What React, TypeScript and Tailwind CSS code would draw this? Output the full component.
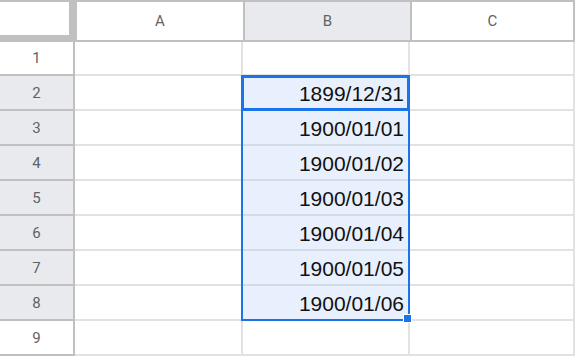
import * as React from 'react';

const COLS = ['A', 'B', 'C'];
const ROWS = 9;
// column B holds the serial-date values, rows 2..8
const VALUES: Record<number, string> = {
  2: '1899/12/31',
  3: '1900/01/01',
  4: '1900/01/02',
  5: '1900/01/03',
  6: '1900/01/04',
  7: '1900/01/05',
  8: '1900/01/06',
};

const isSel = (r: number) => r >= 2 && r <= 8;

export default function App() {
  const rows = Array.from({ length: ROWS }, (_, i) => i + 1);

  return (
    <div className="relative w-[577px] h-[357px] overflow-hidden bg-white font-['Liberation_Sans',Arial,sans-serif]">
      <div className="grid grid-cols-[75px_168px_167px_165px] grid-rows-[42px_34px_repeat(8,35px)] w-[575px]">
        {/* corner with freeze handles */}
        <div className="border-t-2 border-[#c0c0c0] bg-[#c0c0c0] flex flex-col">
          <div className="flex h-[33px]">
            <div className="w-[69px] bg-white" />
            <div className="flex-1 bg-[#c0c0c0]" />
          </div>
          <div className="flex-1 bg-[#c0c0c0]" />
        </div>

        {COLS.map((c) => (
          <div
            key={c}
            className={`flex items-center justify-center border-t-2 border-b-2 border-l-2 border-[#c0c0c0] font-['Roboto',Arial,sans-serif] text-[15px] text-[#5f6368] ${
              c === 'B' ? 'bg-[#e8eaed]' : 'bg-white'
            } ${c === 'C' ? 'border-r-2' : ''}`}
          >
            {c}
          </div>
        ))}

        {rows.map((r) => (
          <React.Fragment key={r}>
            <div
              className={`flex items-center justify-center pt-[1px] border-r-2 border-b-2 border-[#c0c0c0] font-['Roboto',Arial,sans-serif] text-[15px] text-[#5f6368] ${
                isSel(r) ? 'bg-[#e8eaed]' : 'bg-white'
              }`}
            >
              {r}
            </div>
            <div className="border-b-2 border-r-2 border-[#e2e2e2]" />
            <div
              className={`flex items-center justify-end pr-[4px] pt-[2px] border-b-2 border-r-2 text-[21px] text-[#111] ${
                isSel(r) ? 'bg-[#e8f0fe] border-[#d3dbe6]' : 'border-[#e2e2e2]'
              }`}
            >
              {VALUES[r] ?? ''}
            </div>
            <div className="border-b-2 border-r-2 border-[#e2e2e2]" />
          </React.Fragment>
        ))}
      </div>

      {/* selection range B2:B8 */}
      <div className="absolute left-[241px] top-[75px] w-[169px] h-[246px] border-2 border-[#1a73e8] pointer-events-none" />
      {/* active cell B2 */}
      <div className="absolute left-[241px] top-[75px] w-[169px] h-[36px] border-[3px] border-[#1a73e8] pointer-events-none" />
      {/* fill handle */}
      <div className="absolute left-[403px] top-[314px] w-[9px] h-[9px] bg-[#1a73e8] border border-white" />
    </div>
  );
}
